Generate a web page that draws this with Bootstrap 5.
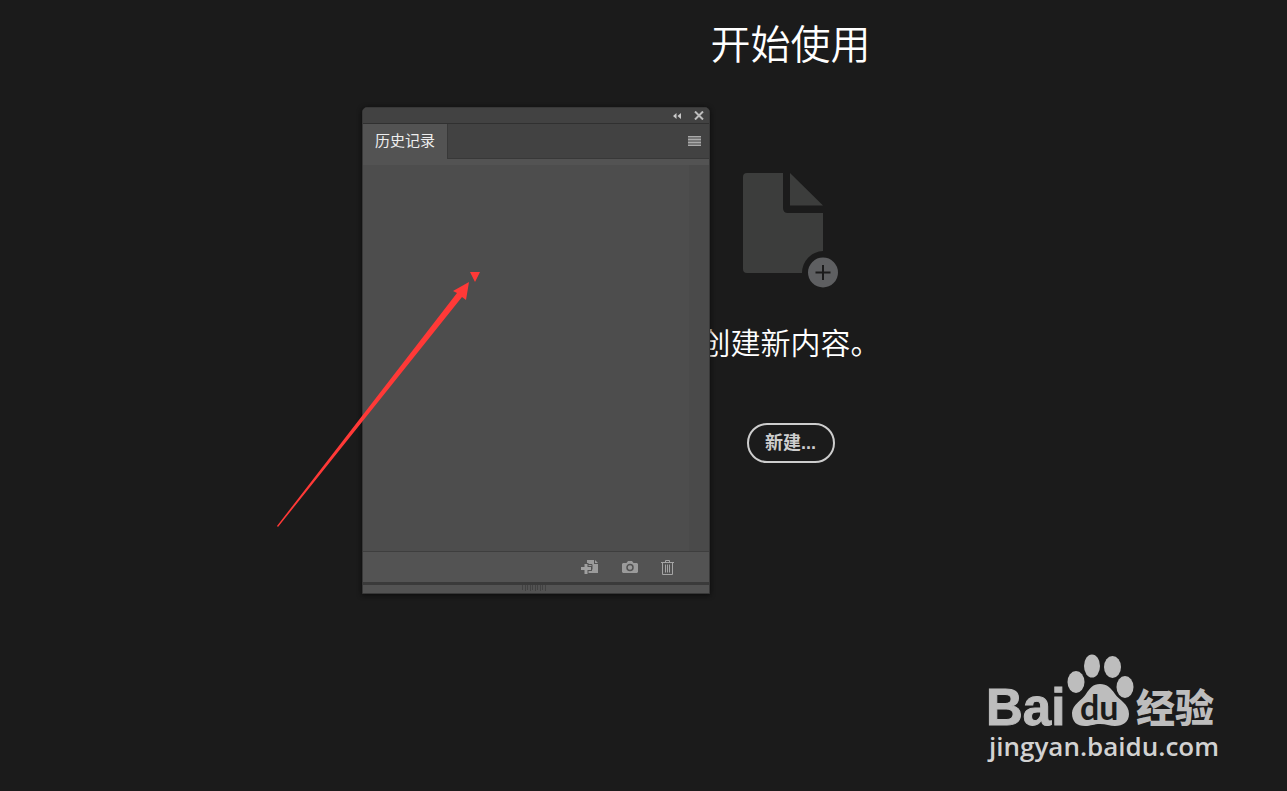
<!DOCTYPE html>
<html lang="zh-CN">
<head>
<meta charset="utf-8">
<meta name="viewport" content="width=device-width, initial-scale=1">
<title>开始使用</title>
<link href="https://cdn.jsdelivr.net/npm/bootstrap@5.3.0/dist/css/bootstrap.min.css" rel="stylesheet">
<style>
body{background:#1b1b1b;color:#fff;font-family:"Noto Sans CJK SC",sans-serif}
.start{padding:12px 0 0 calc(23% - 2px)}
.start h1{font-size:40px;line-height:60px;font-weight:350;margin-bottom:101px}
.start h2{font-size:30px;line-height:44px;font-weight:350;margin:30px 0 60px}
.btn-new{width:88px;height:40px;border:2px solid #cdcdcd;color:#cdcdcd;font-family:"Liberation Sans","Noto Sans CJK SC",sans-serif;font-size:18px;line-height:24px;font-weight:700;padding:0;white-space:nowrap}
.btn-new:hover{background:#cdcdcd;color:#1b1b1b}
.history{left:362px;top:107px;width:348px;height:487px;background:#535353;border:1px solid #383838;border-radius:5px 5px 0 0;box-shadow:0 1px 5px #0b0b0b;overflow:hidden}
.titlebar{height:16px;background:#424242;border-bottom:1px solid #303030;padding-right:5px;gap:13px}
.tabs{height:35px;background:#424242;border-bottom:1px solid #383838}
.tab-btn{width:85px;height:35px;background:#535353;color:#eee;font-size:15px;line-height:20px;border:0;border-right:1px solid #383838;padding:0 0 3px}
.tool{background:none;border:0;padding:0;line-height:0}
.list-body{margin-top:6px;background:#4d4d4d;border-bottom:1px solid #3e3e3e}
.track{width:20px;background:#4a4a4a}
.tools{height:30px;padding-right:35px;gap:23px}
.grip{height:11px;border-top:3px solid #3a3a3a;line-height:0;padding-right:3px}
.pointer{left:270px;top:265px;pointer-events:none}
.brand{right:65px;bottom:20px}
</style>
</head>
<body class="position-relative min-vh-100 overflow-hidden">
<main class="start d-flex flex-column align-items-center text-center">
  <h1>开始使用</h1>
  <svg width="96" height="116" viewBox="0 0 96 116" aria-hidden="true">
    <path fill="#3c3d3c" d="M4 0H40V35Q40 40 45 40H80V78A22 22 0 0 0 59 100H4Q0 100 0 96V4Q0 0 4 0Z"/>
    <path fill="#3c3d3c" d="M47 0L80 32.500H47Z"/>
    <circle cx="80" cy="99.500" r="15" fill="#5e5f61"/>
    <path stroke="#1b1b1b" stroke-width="2" d="M72.500 99.500h15M80 92v15"/>
  </svg>
  <h2>创建新内容。</h2>
  <button type="button" class="btn btn-new rounded-pill">新建...</button>
</main>

<section class="history position-absolute d-flex flex-column" aria-label="历史记录">
  <div class="titlebar d-flex align-items-center justify-content-end">
    <button class="tool" type="button" aria-label="折叠"><svg width="8" height="6" viewBox="0 0 8 6"><path fill="#c8c8c8" d="M3.500 0v6L0 3zM8 0v6L4.500 3z"/></svg></button>
    <button class="tool" type="button" aria-label="关闭"><svg width="10" height="9" viewBox="0 0 10 9"><path stroke="#bdbdbd" stroke-width="2" d="M1 .5l8 8M9 .5l-8 8"/></svg></button>
  </div>
  <div class="tabs d-flex align-items-center justify-content-between">
    <button class="tab-btn" type="button">历史记录</button>
    <button class="tool me-2" type="button" aria-label="面板菜单"><svg width="13" height="10" viewBox="0 0 13 10"><path fill="#777" d="M0 0h13v10H0z"/><path stroke="#aaa" d="M0 .5h13M0 3.500h13M0 6.500h13M0 9.500h13"/></svg></button>
  </div>
  <div class="list-body flex-fill d-flex justify-content-end"><div class="track"></div></div>
  <div class="tools d-flex align-items-center justify-content-end">
    <button class="tool" type="button" aria-label="从当前状态创建新文档"><svg width="18" height="14" viewBox="0 0 18 14"><path fill="#9b9b9b" d="M6 0h7v4h4v9H6z"/><path fill="#9b9b9b" d="M14 0l3 3h-3z"/><path stroke="#535353" stroke-width="5" d="M0 8.500h11M5 3v11"/><path stroke="#a0a0a0" stroke-width="3" d="M0 8.500h10M5 4v10"/><path fill="none" stroke="#535353" d="M7 4.500h4v5h-1"/></svg></button>
    <button class="tool" type="button" aria-label="创建新快照"><svg width="16" height="12" viewBox="0 0 16 12"><path fill="#9b9b9b" d="M1 2h3.500L6 0h4l1.500 2H15l1 1v8l-1 1H1l-1-1V3z"/><circle cx="8" cy="6.500" r="3" fill="none" stroke="#535353" stroke-width="1.500"/></svg></button>
    <button class="tool" type="button" aria-label="删除"><svg width="13" height="15" viewBox="0 0 13 15"><path fill="none" stroke="#a5a5a5" d="M0 2.500h13M4.500 2.500v-2h4v2M1.500 3v11.500h10V3M4.500 4.500v8M6.500 4.500v8M8.500 4.500v8"/></svg></button>
  </div>
  <div class="grip text-center"><svg width="25" height="6" viewBox="0 0 25 6"><path stroke="#424242" d="M.5 0v5M3.500 0v6M5.500 0v5M8.500 0v6M10.500 0v5M13.500 0v6M15.500 0v5M18.500 0v6M20.500 0v5M23.500 0v6"/></svg></div>
</section>

<svg class="pointer position-absolute" width="215" height="265" viewBox="0 0 215 265" aria-hidden="true">
  <path fill="#ff3937" d="M199 17L196 35 192 32 8 262 7 261 187 28 183 26ZM200 7h10l-5 10z"/>
</svg>

<svg class="brand position-absolute" width="240" height="120" viewBox="0 0 240 120" role="img" aria-label="Baidu 经验">
  <g fill="#bdbdbd">
    <text x="4" y="74" font-family="Liberation Sans, sans-serif" font-weight="700" font-size="51" stroke="#bdbdbd">Bai</text>
    <ellipse cx="94" cy="31" rx="8.500" ry="11"/><ellipse cx="110" cy="15" rx="8" ry="11.500"/><ellipse cx="130.500" cy="16" rx="8.500" ry="11"/><ellipse cx="143" cy="36" rx="8.500" ry="11"/>
    <path d="M118 33C125 33 129 37 133 43C137 49 147 53 147 63C147 71 141 75 133 75C128 75 124 73 118 73C112 73 109 75 103 75C95 75 90 71 90 62C90 54 100 49 104 43C108 37 111 33 118 33Z"/>
    <text x="154" y="71" font-family="Noto Sans CJK SC, sans-serif" font-weight="900" font-size="39">经验</text>
  </g>
  <text x="98" y="69" fill="#1b1b1b" font-family="Lato, sans-serif" font-weight="700" font-size="34">du</text>
  <text x="7" y="105" fill="#d2d2d2" font-family="Open Sans, sans-serif" font-weight="600" font-size="26">jingyan.baidu.com</text>
</svg>
<script src="https://cdn.jsdelivr.net/npm/bootstrap@5.3.0/dist/js/bootstrap.bundle.min.js"></script>
</body>
</html>
